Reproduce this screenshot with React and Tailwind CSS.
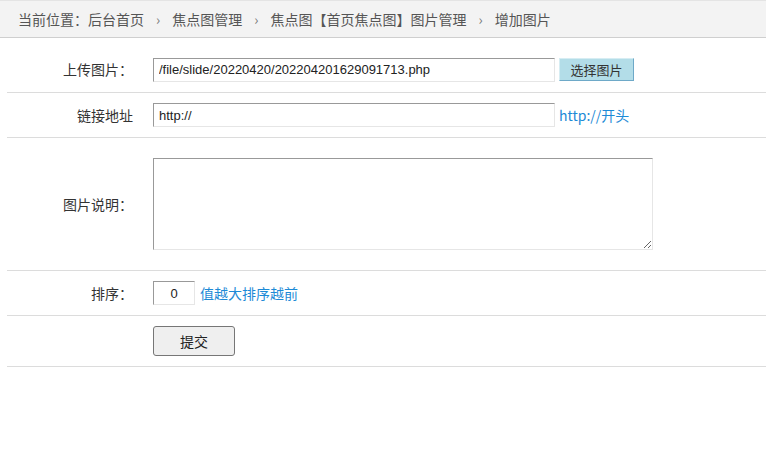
export default function App() {
  const crumbs = ['后台首页', '焦点图管理', '焦点图【首页焦点图】图片管理', '增加图片'];
  const font = { fontFamily: '"Noto Sans CJK SC", "Liberation Sans", sans-serif' };

  return (
    <div className="w-[766px] h-[463px] bg-white text-[#333]" style={font}>
      {/* 位置导航 */}
      <div className="h-[38px] border-t border-b border-t-[#e4e4e4] border-b-[#cfcfcf] bg-[#f3f3f3] flex items-center pl-[18px] text-[14px] text-[#555]">
        <span>当前位置：</span>
        {crumbs.map((c, i) => (
          <span key={c} className="flex items-center">
            {i > 0 && <span className="mx-[12px] text-[14px] text-[#777]">›</span>}
            <span>{c}</span>
          </span>
        ))}
      </div>

      <div className="ml-[7px] text-[14px]">
        {/* 上传图片 */}
        <div className="h-[55px] pt-[9px] flex items-center border-b border-[#dcdcdc]">
          <div className="w-[146px] pr-[20px] text-right">上传图片：</div>
          <input
            readOnly
            value="/file/slide/20220420/202204201629091713.php"
            className="w-[402px] h-[24px] px-[5px] border border-t-[#999] border-l-[#999] border-r-[#e6e6e6] border-b-[#e6e6e6] text-[13px] text-[#222] outline-none"
            style={{ fontFamily: '"Liberation Sans", Arial, sans-serif' }}
          />
          <button className="ml-[4px] w-[75px] h-[23px] bg-[#b3dde8] border border-t-[#d6edf3] border-l-[#d6edf3] border-r-[#6ea9c8] border-b-[#6ea9c8] text-[13px] text-[#333]">
            选择图片
          </button>
        </div>

        {/* 链接地址 */}
        <div className="h-[45px] flex items-center border-b border-[#dcdcdc]">
          <div className="w-[146px] pr-[20px] text-right">链接地址</div>
          <input
            readOnly
            value="http://"
            className="w-[402px] h-[24px] px-[5px] border border-t-[#999] border-l-[#999] border-r-[#e6e6e6] border-b-[#e6e6e6] text-[13px] text-[#222] outline-none"
            style={{ fontFamily: '"Liberation Sans", Arial, sans-serif' }}
          />
          <span className="ml-[4px] text-[#1d8ad6]">http://开头</span>
        </div>

        {/* 图片说明 */}
        <div className="h-[133px] flex items-center border-b border-[#dcdcdc]">
          <div className="w-[146px] pr-[20px] text-right">图片说明：</div>
          <textarea
            className="w-[500px] h-[92px] border border-t-[#999] border-l-[#999] border-r-[#e6e6e6] border-b-[#e6e6e6] outline-none"
          />
        </div>

        {/* 排序 */}
        <div className="h-[45px] flex items-center border-b border-[#dcdcdc]">
          <div className="w-[146px] pr-[20px] text-right">排序：</div>
          <input
            readOnly
            value="0"
            className="w-[42px] h-[24px] text-center border border-t-[#999] border-l-[#999] border-r-[#e6e6e6] border-b-[#e6e6e6] text-[13px] text-[#222] outline-none"
            style={{ fontFamily: '"Liberation Sans", Arial, sans-serif' }}
          />
          <span className="ml-[5px] text-[#1d8ad6]">值越大排序越前</span>
        </div>

        {/* 提交 */}
        <div className="h-[51px] flex items-start pt-[10px] border-b border-[#dcdcdc]">
          <div className="w-[146px]" />
          <button className="w-[82px] h-[30px] bg-[#efefef] border border-[#767676] rounded-[3px] text-[14px] text-[#222]">
            提交
          </button>
        </div>
      </div>
    </div>
  );
}
